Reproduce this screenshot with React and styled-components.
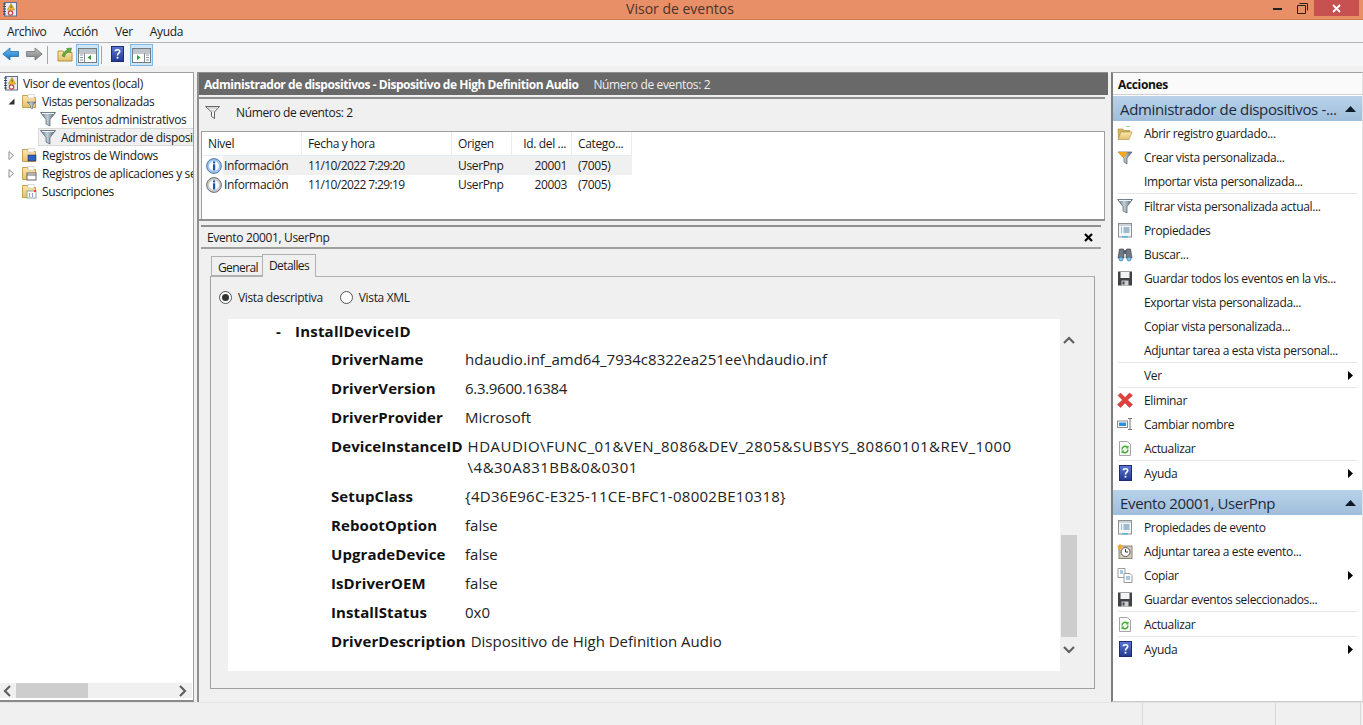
import React from 'react'
import styled, { createGlobalStyle } from 'styled-components'

const Global = createGlobalStyle`
  html, body { margin: 0; padding: 0; background: #f0f0f0; overflow: hidden; }
  * { box-sizing: border-box; }
  body { font-family: "Open Sans", "Noto Sans", sans-serif; font-size: 12px; color: #1b1b1b; letter-spacing: -0.35px; }
`

const Window = styled.div`
  width: 1363px;
  height: 725px;
  display: flex;
  flex-direction: column;
  background: #f0f0f0;
  overflow: hidden;
`
const TitleBar = styled.div`
  height: 20px;
  flex: none;
  display: grid;
  grid-template-columns: 1fr auto 1fr;
  background: #e98f67;
  border-bottom: 1px solid #c67a58;
`
const TitleIcon = styled.div`
  padding: 1px 0 0 2px;
`
const TitleText = styled.div`
  font-size: 14px;
  line-height: 18px;
  color: #4a3328;
  letter-spacing: 0;
  padding-right: 3px;
`
const WindowButtons = styled.div`
  display: flex;
  justify-content: flex-end;
  padding-right: 4px;
`
const WinBtn = styled.div`
  width: ${p => p.$w}px;
  height: 16px;
  display: flex;
  align-items: center;
  justify-content: center;
  background: ${p => p.$close ? '#c75050' : 'transparent'};
`
const MenuBar = styled.div`
  height: 23px;
  flex: none;
  display: flex;
  align-items: center;
  background: #f5f6f7;
  border-bottom: 1px solid #b4b4b4;
  padding-left: 7px;
  gap: 17px;
`
const ToolBar = styled.div`
  height: 23px;
  flex: none;
  display: flex;
  align-items: flex-start;
  background: #f5f6f7;
  padding: 1px 0 0 2px;
`
const ToolSlot = styled.span`
  display: block;
  margin: 2px 0 0 ${p => p.$ml || 0}px;
`
const ToolSep = styled.div`
  width: 1px;
  height: 18px;
  margin: 2px 0 0 ${p => p.$ml}px;
  background: #a6a6a6;
`
const ToolToggle = styled.div`
  width: 23px;
  height: 22px;
  margin-left: ${p => p.$ml}px;
  display: flex;
  align-items: center;
  justify-content: center;
  background: #cde6f7;
  border: 1px solid #7cb8e8;
`
const Main = styled.div`
  flex: 1;
  display: flex;
  padding-top: 6px;
  min-height: 0;
`
const LeftPane = styled.div`
  width: 194px;
  flex: none;
  height: 630px;
  display: flex;
  flex-direction: column;
  background: #fff;
  border: 1px solid #a0a0a0;
  border-left: 0;
  border-bottom: 2px solid #8a8a8a;
`
const Tree = styled.div`
  flex: 1;
  padding-top: 1px;
  overflow: hidden;
`
const TreeRow = styled.div`
  height: 18px;
  display: flex;
  align-items: center;
  white-space: nowrap;
  overflow: hidden;
  padding-left: ${p => p.$indent}px;
  margin-left: ${p => p.$sel ? 38 : 0}px;
  ${p => p.$sel && `
    padding-left: 1px;
    background: #f0f0f0;
    border: 1px solid #d9d9d9;
    border-right: 0;
  `}
`
const Expander = styled.span`
  width: 13px;
  flex: none;
  display: flex;
  align-items: center;
  justify-content: flex-start;
`
const TreeIcon = styled.span`
  width: 16px;
  height: 16px;
  flex: none;
  margin-right: ${p => p.$gap || 5}px;
`
const HScroll = styled.div`
  height: 15px;
  flex: none;
  display: flex;
  align-items: center;
  background: #f0f0f0;
  padding: 0 5px 0 3px;
  margin-right: 1px;
  margin-bottom: 2px;
`
const HThumb = styled.div`
  width: 72px;
  height: 15px;
  background: #cdcdcd;
  margin: 0 auto 0 4px;
`
const Mid = styled.div`
  width: 911px;
  flex: none;
  margin: 0 3px;
  height: 630px;
  display: flex;
  flex-direction: column;
  border-left: 2px solid #8f8f8f;
`
const MidHeader = styled.div`
  height: 23px;
  flex: none;
  display: flex;
  align-items: center;
  gap: 15px;
  background: #696969;
  color: #fff;
  padding-left: 5px;
  border-top: 1px solid #8f8f8f;
  font-weight: 700;
  letter-spacing: -0.45px;
  span + span { font-weight: 400; color: #eee; letter-spacing: -0.35px; }
`
const ListPanel = styled.div`
  height: 124px;
  flex: none;
  margin: 2px 3px 0 0;
  display: flex;
  flex-direction: column;
  padding: 0 0 0 2px;
  border-top: 2px solid #8f8f8f;
  border-bottom: 2px solid #8f8f8f;
`
const FilterBar = styled.div`
  height: 33px;
  flex: none;
  display: flex;
  align-items: flex-start;
  gap: 15px;
  padding: 5px 0 0 4px;
  border-bottom: 1px solid #a0a0a0;
`
const Table = styled.div`
  flex: 1;
  background: #fff;
  border-left: 1px solid #a0a0a0;
  border-right: 1px solid #a0a0a0;
`
const TableRow = styled.div`
  display: grid;
  grid-template-columns: 100px 150px 60px 60px 60px;
  width: 430px;
  height: ${p => p.$head ? 24 : 19}px;
  align-items: center;
  ${p => p.$head && 'border-bottom: 1px solid #e5eef6;'}
`
const Cell = styled.div`
  padding-left: 6px;
  white-space: nowrap;
  overflow: hidden;
  height: 100%;
  display: flex;
  align-items: center;
  background: ${p => p.$sel ? '#f0f0f0' : 'transparent'};
  justify-content: ${p => p.$right ? 'flex-end' : 'flex-start'};
  ${p => p.$right && 'padding-right: 5px;'}
  ${p => p.$head && 'border-right: 1px solid #e5eef6;'}
  ${p => p.$tight && 'letter-spacing: -0.6px;'}
`
const LevelCell = styled.div`
  height: 100%;
  display: flex;
  align-items: center;
  padding-left: 4px;
  gap: 1px;
`
const LevelText = styled.span`
  flex: 1;
  height: 100%;
  display: flex;
  align-items: center;
  background: ${p => p.$sel ? '#f0f0f0' : 'transparent'};
  padding-left: 1px;
`
const DetailBar = styled.div`
  height: 24px;
  flex: none;
  display: flex;
  align-items: center;
  justify-content: space-between;
  margin: 4px 7px 0 2px;
  padding: 0 8px 0 6px;
  border-top: 2px solid #8f8f8f;
  border-bottom: 2px solid #a0a0a0;
`
const Tabs = styled.div`
  display: flex;
  align-items: flex-end;
  height: 27px;
  flex: none;
  padding-left: 12px;
`
const Tab = styled.div`
  height: ${p => p.$active ? 23 : 20}px;
  padding: ${p => p.$active ? '0 6px' : '0 4px 0 6px'};
  display: flex;
  align-items: center;
  letter-spacing: -0.6px;
  background: #f0f0f0;
  border: 1px solid #b0b0b0;
  border-bottom: ${p => p.$active ? '0' : '1px solid #b0b0b0'};
  ${p => !p.$active && 'border-right: 0; padding-top: 2px;'}
  ${p => p.$active && 'position: relative; top: 1px; padding-bottom: 1px;'}
`
const TabPanel = styled.div`
  margin-left: 11px;
  width: 885px;
  height: 413px;
  flex: none;
  border: 1px solid #a0a0a0;
  border-top: 1px solid #b0b0b0;
  padding: 10px 0 0 8px;
`
const Radios = styled.div`
  display: flex;
  align-items: center;
  height: 20px;
  gap: 17px;
`
const RadioLabel = styled.label`
  display: flex;
  align-items: center;
  gap: 6px;
`
const RadioDot = styled.span`
  width: 13px;
  height: 13px;
  border-radius: 50%;
  border: 1px solid #555;
  background: #fff;
  display: flex;
  align-items: center;
  justify-content: center;
  &::after {
    content: '';
    width: 7px;
    height: 7px;
    border-radius: 50%;
    background: ${p => p.$on ? '#333' : 'transparent'};
  }
`
const DetailArea = styled.div`
  display: flex;
  margin: 12px 0 0 9px;
  height: 352px;
`
const WhiteBox = styled.div`
  width: 832px;
  flex: none;
  background: #fff;
  overflow: hidden;
  font-size: 15px;
  letter-spacing: 0;
  color: #222;
`
const Heading = styled.div`
  height: 26px;
  line-height: 24px;
  display: flex;
  font-weight: 700;
  color: #111;
  padding-left: 48px;
  gap: 14px;
  letter-spacing: 0.2px;
`
const DataRow = styled.div`
  display: flex;
  padding: 4px 0 4px 103px;
  line-height: 21px;
  white-space: nowrap;
`
const DataLabel = styled.span`
  min-width: 129px;
  font-weight: 700;
  color: #111;
  margin-right: 5px;
  letter-spacing: 0.1px;
`
const DataValue = styled.span`
  letter-spacing: ${p => p.$spacing || 0}px;
`
const VScroll = styled.div`
  width: 16px;
  margin-left: 1px;
  flex: none;
  display: flex;
  flex-direction: column;
  align-items: stretch;
  padding-top: 17px;
`
const VThumb = styled.div`
  height: 102px;
  margin: 187px 0 8px;
  background: #cdcdcd;
`
const ArrowWrap = styled.div`
  height: 12px;
  display: flex;
  justify-content: center;
`
const Right = styled.div`
  width: 252px;
  flex: none;
  height: 630px;
  background: #fff;
  border-left: 2px solid #7d7d7d;
  border-top: 1px solid #a0a0a0;
  border-bottom: 1px solid #c8c8c8;
  border-right: 1px solid #e0e0e0;
  display: flex;
  flex-direction: column;
`
const ActionsTitle = styled.div`
  height: 22px;
  flex: none;
  display: flex;
  align-items: center;
  padding: 2px 0 0 5px;
  font-weight: 700;
  color: #111;
  border-bottom: 1px solid #d0d0d0;
  margin-bottom: 1px;
  background: #fafafa;
`
const SectionHead = styled.div`
  height: ${p => p.$h}px;
  flex: none;
  display: flex;
  align-items: center;
  justify-content: space-between;
  padding: 0 6px 0 7px;
  font-size: 15px;
  letter-spacing: -0.35px;
  color: #1b2a3a;
  background: linear-gradient(#b9d2e9, #9fbedb);
  white-space: nowrap;
  margin-top: ${p => p.$mt || 0}px;
`
const ActionRow = styled.div`
  height: 24px;
  flex: none;
  display: flex;
  align-items: center;
  padding: 0 8px 0 4px;
  white-space: nowrap;
`
const ActionIcon = styled.span`
  width: 16px;
  height: 16px;
  flex: none;
  margin-right: 11px;
`
const ActionText = styled.span`
  flex: 1;
`
const ActionSep = styled.div`
  height: 1px;
  flex: none;
  background: #e6e6e6;
  margin: 0 5px 0 5px;
`
const StatusBar = styled.div`
  height: 23px;
  flex: none;
  display: flex;
  justify-content: flex-end;
  background: #f0f0f0;
  border-top: 1px solid #e3e3e3;
`
const StatusCell = styled.div`
  width: ${p => p.$w}px;
  border-left: 1px solid #d8d8d8;
`

const Svg = ({ children, w = 16, h = 16 }) => (
  <svg width={w} height={h} viewBox={`0 0 ${w} ${h}`} style={{ display: 'block' }}>{children}</svg>
)

const Defs = () => (
  <svg width="0" height="0" style={{ position: 'absolute' }}>
    <defs>
      <linearGradient id="fun" x1="0" x2="1" y1="0" y2="0">
        <stop offset="0" stopColor="#5f7484" /><stop offset=".45" stopColor="#c3ced6" /><stop offset="1" stopColor="#4d6172" />
      </linearGradient>
      <linearGradient id="fold" x1="0" x2="0" y1="0" y2="1">
        <stop offset="0" stopColor="#fbe9ae" /><stop offset="1" stopColor="#e4c06e" />
      </linearGradient>
      <linearGradient id="arrowB" x1="0" x2="0" y1="0" y2="1">
        <stop offset="0" stopColor="#6bc0f2" /><stop offset="1" stopColor="#1a72c4" />
      </linearGradient>
      <linearGradient id="arrowG" x1="0" x2="0" y1="0" y2="1">
        <stop offset="0" stopColor="#c4c4c4" /><stop offset="1" stopColor="#7a7a7a" />
      </linearGradient>
      <linearGradient id="help" x1="0" x2="0" y1="0" y2="1">
        <stop offset="0" stopColor="#5a78d6" /><stop offset="1" stopColor="#23378f" />
      </linearGradient>
    </defs>
  </svg>
)

const LogIcon = () => (
  <Svg>
    <rect x="2.500" y="1.500" width="12" height="13.500" fill="#e8ecf3" stroke="#5f6f8b" />
    <path d="M1 3h3M1 5.500h3M1 8h3M1 10.500h3M1 13h3" stroke="#39465c" strokeWidth="1.200" />
    <path d="M9 2.500l3.600 6.500H5.400z" fill="#f5c52d" stroke="#a97e10" strokeWidth=".6" />
    <rect x="8.600" y="4.600" width=".9" height="2.600" fill="#5c3f00" />
    <circle cx="8.500" cy="12" r="2.200" fill="#fff" stroke="#cc3b3b" strokeWidth="1.200" />
  </Svg>
)
const FunnelIcon = () => (
  <Svg>
    <path d="M.5 1.500h15l-5.500 7v6.500l-4-2v-4.500z" fill="url(#fun)" stroke="#4f5e6b" strokeWidth=".7" />
    <path d="M2 2.500h12" stroke="#f0f3f5" />
  </Svg>
)
const GoldFunnel = () => (
  <Svg>
    <path d="M1 3h14l-5 6v6l-3-2V9z" fill="url(#fun)" stroke="#56636e" strokeWidth=".7" />
    <path d="M1 3h9l-2 5H5z" fill="#f3a81c" />
  </Svg>
)
const HollowFunnel = () => (
  <Svg>
    <path d="M.5 2.500h14l-5 5.500v6.500l-3-2V8z" fill="#f6f6f6" stroke="#555" strokeWidth=".9" />
    <path d="M3 4h9M5.500 7h4" stroke="#aaa" strokeWidth=".8" />
  </Svg>
)
const Folder = ({ children }) => (
  <Svg>
    <path d="M1.500 4.500V2.500h5l1 2h7v10h-13z" fill="url(#fold)" stroke="#c69f4c" />
    <rect x="7" y="1.500" width="6" height="3.500" fill="#fff" stroke="#bbb" strokeWidth=".5" />
    {children}
  </Svg>
)
const FolderOpen = () => (
  <Svg>
    <path d="M1 4h5l1 1.500h6V7H4L1.500 14z" fill="#d9b65f" stroke="#a98a3c" strokeWidth=".6" />
    <path d="M4 7h11l-3 7.500H1z" fill="url(#fold)" stroke="#b08f3f" strokeWidth=".6" />
    <path d="M9 1.500h4" stroke="#8fd48f" />
  </Svg>
)
const FolderUp = () => (
  <Svg>
    <path d="M1 5h5l1 1.500h8V15H1z" fill="url(#fold)" stroke="#b8923c" />
    <path d="M5 10C6 6 9 4.500 10.500 4L9.500 2.500 14.500 2l-1 4.500-1.200-1.200C10 6.500 8 8.500 7.500 11z" fill="#62ae3a" stroke="#3e7f20" strokeWidth=".5" />
  </Svg>
)
const PaneIcon = ({ flip }) => (
  <Svg w={19} h={16}>
    <rect x=".5" y="1.500" width="18" height="14" fill="#fff" stroke="#7a7a7a" />
    <rect x="1" y="2" width="17" height="3" fill="#b9c4cf" />
    <path d={flip ? 'M12.500 6v9M1 6h17' : 'M6.500 6v9M1 6h17'} stroke="#8a8a8a" />
    {flip
      ? <><path d="M5 8v5l3.500-2.500z" fill="#2f9a33" /><path d="M14 8h3M14 10.500h3M14 13h3" stroke="#7f9cb5" /></>
      : <><path d="M13 8v5l-3.500-2.500z" fill="#2f9a33" /><path d="M2 8h3M2 10.500h3M2 13h3" stroke="#7f9cb5" /></>}
  </Svg>
)
const ArrowIcon = ({ dir, grey }) => (
  <Svg w={18} h={16}>
    <path
      transform={dir === 'right' ? 'translate(18 0) scale(-1 1)' : undefined}
      d="M.8 8L8 2v3.500h8.500v5H8V14z"
      fill={`url(#${grey ? 'arrowG' : 'arrowB'})`}
      stroke={grey ? '#666' : '#17619f'}
      strokeWidth=".7"
    />
  </Svg>
)
const HelpIcon = () => (
  <Svg>
    <rect x="2.500" y=".5" width="12" height="15" fill="url(#help)" stroke="#1d2b73" />
    <path d="M6.300 5.200C6.300 3.300 10.700 3 10.700 5.400 10.700 7.200 8.500 7.200 8.500 9.500" fill="none" stroke="#fff" strokeWidth="1.600" />
    <rect x="7.600" y="10.800" width="1.800" height="1.800" fill="#fff" />
  </Svg>
)
const InfoIcon = ({ blue }) => (
  <Svg>
    <circle cx="8" cy="8" r="7.400" fill={blue ? '#9fc2ea' : '#c9c9c9'} stroke={blue ? '#4f79ab' : '#707070'} />
    <circle cx="8" cy="8" r="5" fill="#fafcff" />
    <rect x="7" y="3.400" width="2.200" height="2" fill="#1f56a8" />
    <rect x="7" y="6.300" width="2.200" height="6.200" fill="#1f56a8" />
  </Svg>
)
const PropsIcon = () => (
  <Svg>
    <rect x="1.500" y="1.500" width="13" height="13.500" fill="#f3f5f7" stroke="#8e8e8e" />
    <rect x="2" y="2" width="12" height="2" fill="#ccd3da" />
    <path d="M4 6h1M4 8h1M4 10h1M6.500 6h6M6.500 8h6M6.500 10h6" stroke="#4b7fa8" />
    <rect x="5" y="14" width="6" height="1.500" fill="#4db6e8" />
  </Svg>
)
const Binoculars = () => (
  <Svg>
    <path d="M1 12l1.500-9h4L7 12zM9 12l.5-9h4L15 12z" fill="#6f7a85" stroke="#333" strokeWidth=".6" />
    <rect x="6.500" y="4" width="3" height="4" fill="#55606a" />
    <circle cx="4" cy="13" r="2" fill="#7cc4f0" stroke="#2a6ea0" strokeWidth=".6" />
    <circle cx="12" cy="13" r="2" fill="#7cc4f0" stroke="#2a6ea0" strokeWidth=".6" />
  </Svg>
)
const Floppy = () => (
  <Svg>
    <path d="M1 1.500h14v14H1z" fill="#3f4347" />
    <rect x="3.500" y="2" width="9" height="6" fill="#f4f4f4" />
    <rect x="4.500" y="10.500" width="7" height="5" fill="#cfcfcf" />
    <rect x="5.500" y="11.500" width="2" height="3" fill="#44484c" />
  </Svg>
)
const RedX = () => (
  <Svg>
    <path d="M1 3.500L3.500 1 8 5.500 12.500 1 15.500 3.500 10.500 8l5 4.500-3 3L8 11l-4.500 4.500-3-3L5.500 8z" fill="#e0403c" stroke="#b3302c" strokeWidth=".5" />
  </Svg>
)
const RenameIcon = () => (
  <Svg>
    <rect x=".5" y="5" width="10" height="6.500" fill="#fff" stroke="#8b8b8b" />
    <rect x="2" y="6.500" width="7" height="3.500" fill="#2d8ee0" />
    <path d="M11 2.500h4M13 2.500v11M11 13.500h4" stroke="#777" fill="none" />
  </Svg>
)
const RefreshIcon = () => (
  <Svg>
    <path d="M2.500 1.500h8l3 3v11h-11z" fill="#fbfbfb" stroke="#a5a5a5" />
    <path d="M5 9.500a3.200 3.200 0 0 1 5.500-2.200M11 9.500a3.200 3.200 0 0 1-5.500 2.200" fill="none" stroke="#3fae2d" strokeWidth="1.500" />
    <path d="M11.500 5.500v3h-3zM4.500 13.500v-3h3z" fill="#3fae2d" />
  </Svg>
)
const ClockTask = () => (
  <Svg>
    <rect x="2" y="3" width="13" height="12.500" fill="#d4cdbd" stroke="#8d8676" />
    <circle cx="8.500" cy="9" r="4.500" fill="#fff" stroke="#555" />
    <path d="M8.500 6v3h2.500" fill="none" stroke="#333" />
    <path d="M3 .5l1 2 2 .5-1.500 1.500L5 7 3 5.500 1 7l.5-2.500L0 3l2-.5z" fill="#f5a623" />
  </Svg>
)
const CopyIcon = () => (
  <Svg>
    <path d="M1 1.500h7v9H1z" fill="#fff" stroke="#9a9a9a" />
    <path d="M3 4h3M3 6h3" stroke="#4b8fc4" />
    <path d="M7 6.500h6l2 2v7H7z" fill="#fff" stroke="#9a9a9a" />
    <path d="M9 10h4M9 12h4" stroke="#4b8fc4" />
  </Svg>
)
const Tri = ({ dir }) => (
  <svg width="7" height="9" viewBox="0 0 7 9" style={{ display: 'block' }}>
    {dir === 'right' && <path d="M1 0l5 4.500-5 4.500z" fill="#000" />}
    {dir === 'open' && <path d="M6.500 1.500v6h-6z" fill="#333" />}
    {dir === 'closed' && <path d="M1 .5l4.500 4-4.500 4z" fill="#fff" stroke="#8e8e8e" />}
  </svg>
)
const UpTri = () => (
  <svg width="11" height="6" viewBox="0 0 11 6"><path d="M0 6L5.500 0 11 6z" fill="#0d1a28" /></svg>
)
const Chevron = ({ dir }) => {
  const d = {
    up: 'M1 7L6 2l5 5',
    down: 'M1 2l5 5 5-5',
    left: 'M7 1L2 6l5 5',
    right: 'M2 1l5 5-5 5',
  }[dir]
  const horizontal = dir === 'left' || dir === 'right'
  return (
    <svg width={horizontal ? 9 : 12} height={horizontal ? 12 : 9} viewBox={horizontal ? '0 0 9 12' : '0 0 12 9'} style={{ display: 'block' }}>
      <path d={d} fill="none" stroke="#606060" strokeWidth="2.200" />
    </svg>
  )
}

const treeRows = [
  { indent: 3, text: 'Visor de eventos (local)', icon: <LogIcon />, gap: 4 },
  { indent: 8, exp: 'open', text: 'Vistas personalizadas', icon: <Folder><path d="M6 9h9l-3.500 3.500V16L9.500 15v-2.500z" fill="url(#fun)" stroke="#5f6e7b" strokeWidth=".5" /></Folder> },
  { indent: 40, text: 'Eventos administrativos', icon: <FunnelIcon /> },
  { indent: 40, sel: true, text: 'Administrador de dispositivos', icon: <FunnelIcon /> },
  { indent: 8, exp: 'closed', text: 'Registros de Windows', icon: <Folder><rect x="7" y="8" width="8" height="6" fill="#2c62c8" stroke="#223" strokeWidth=".5" /></Folder> },
  { indent: 8, exp: 'closed', text: 'Registros de aplicaciones y servicios', icon: <Folder><rect x="6" y="8" width="9" height="7" fill="#fff" stroke="#666" /><path d="M6 10h9" stroke="#666" /></Folder> },
  { indent: 21, text: 'Suscripciones', icon: <Folder><rect x="6" y="8" width="9" height="7" fill="#fff" stroke="#8aa" /><path d="M8 11h1M11 11h1M8 13h1M11 13h1" stroke="#33a" /><path d="M13 7h2v2h-2z" fill="#e44" /></Folder> },
]

const events = [
  { date: '11/10/2022 7:29:20', id: '20001', sel: true },
  { date: '11/10/2022 7:29:19', id: '20003' },
]

const dataRows = [
  ['DriverName', 'hdaudio.inf_amd64_7934c8322ea251ee\\hdaudio.inf'],
  ['DriverVersion', '6.3.9600.16384', -0.3],
  ['DriverProvider', 'Microsoft'],
  ['DeviceInstanceID', <>HDAUDIO\FUNC_01&amp;VEN_8086&amp;DEV_2805&amp;SUBSYS_80860101&amp;REV_1000<br />\4&amp;30A831BB&amp;0&amp;0301</>, 0.48],
  ['SetupClass', '{4D36E96C-E325-11CE-BFC1-08002BE10318}', 0.28],
  ['RebootOption', 'false'],
  ['UpgradeDevice', 'false'],
  ['IsDriverOEM', 'false'],
  ['InstallStatus', '0x0'],
  ['DriverDescription', 'Dispositivo de High Definition Audio'],
]

const firstActions = [
  [<FolderOpen />, 'Abrir registro guardado...'],
  [<GoldFunnel />, 'Crear vista personalizada...'],
  [null, 'Importar vista personalizada...'],
  'sep',
  [<FunnelIcon />, 'Filtrar vista personalizada actual...'],
  [<PropsIcon />, 'Propiedades'],
  [<Binoculars />, 'Buscar...'],
  [<Floppy />, 'Guardar todos los eventos en la vis...'],
  [null, 'Exportar vista personalizada...'],
  [null, 'Copiar vista personalizada...'],
  [null, 'Adjuntar tarea a esta vista personal...'],
  'sep',
  [null, 'Ver', true],
  'sep',
  [<RedX />, 'Eliminar'],
  [<RenameIcon />, 'Cambiar nombre'],
  [<RefreshIcon />, 'Actualizar'],
  'sep',
  [<HelpIcon />, 'Ayuda', true],
]

const secondActions = [
  [<PropsIcon />, 'Propiedades de evento'],
  [<ClockTask />, 'Adjuntar tarea a este evento...'],
  [<CopyIcon />, 'Copiar', true],
  [<Floppy />, 'Guardar eventos seleccionados...'],
  'sep',
  [<RefreshIcon />, 'Actualizar'],
  'sep',
  [<HelpIcon />, 'Ayuda', true],
]

const ActionList = ({ items }) => items.map((item, i) => {
  if (item === 'sep') return <ActionSep key={i} />
  const [icon, text, more] = item
  return (
    <ActionRow key={i}>
      <ActionIcon>{icon}</ActionIcon>
      <ActionText>{text}</ActionText>
      {more && <Tri dir="right" />}
    </ActionRow>
  )
})

const App = () => {
  return (
    <Window>
      <Global />
      <Defs />
      <TitleBar>
        <TitleIcon><LogIcon /></TitleIcon>
        <TitleText>Visor de eventos</TitleText>
        <WindowButtons>
          <WinBtn $w={26}>
            <svg width="9" height="3"><rect width="9" height="2" y="1" fill="#222" /></svg>
          </WinBtn>
          <WinBtn $w={24}>
            <svg width="11" height="11" viewBox="0 0 11 11"><path d="M2.500.5h8v7M.5 2.500h8v8h-8z" fill="none" stroke="#222" /></svg>
          </WinBtn>
          <WinBtn $w={45} $close>
            <svg width="9" height="9" viewBox="0 0 9 9"><path d="M1 1l7 7M8 1L1 8" stroke="#fff" strokeWidth="1.800" /></svg>
          </WinBtn>
        </WindowButtons>
      </TitleBar>
      <MenuBar>
        <span>Archivo</span>
        <span>Acción</span>
        <span>Ver</span>
        <span>Ayuda</span>
      </MenuBar>
      <ToolBar>
        <ToolSlot><ArrowIcon dir="left" /></ToolSlot>
        <ToolSlot $ml={5}><ArrowIcon dir="right" grey /></ToolSlot>
        <ToolSep $ml={4} />
        <ToolSlot $ml={9}><FolderUp /></ToolSlot>
        <ToolToggle $ml={3}><PaneIcon /></ToolToggle>
        <ToolSep $ml={2} />
        <ToolSlot $ml={7}><HelpIcon /></ToolSlot>
        <ToolToggle $ml={5}><PaneIcon flip /></ToolToggle>
      </ToolBar>
      <Main>
        <LeftPane>
          <Tree>
            {treeRows.map((r) => (
              <TreeRow key={r.text} $indent={r.indent} $sel={r.sel}>
                {r.exp && <Expander><Tri dir={r.exp} /></Expander>}
                <TreeIcon $gap={r.gap}>{r.icon}</TreeIcon>
                {r.text}
              </TreeRow>
            ))}
          </Tree>
          <HScroll>
            <Chevron dir="left" />
            <HThumb />
            <Chevron dir="right" />
          </HScroll>
        </LeftPane>
        <Mid>
          <MidHeader>
            <span>Administrador de dispositivos - Dispositivo de High Definition Audio</span>
            <span>Número de eventos: 2</span>
          </MidHeader>
          <ListPanel>
            <FilterBar>
              <HollowFunnel />
              <span>Número de eventos: 2</span>
            </FilterBar>
            <Table>
              <TableRow $head>
                <Cell $head>Nivel</Cell>
                <Cell $head>Fecha y hora</Cell>
                <Cell $head>Origen</Cell>
                <Cell $head $right>Id. del ...</Cell>
                <Cell $head>Catego...</Cell>
              </TableRow>
              {events.map((e) => (
                <TableRow key={e.id}>
                  <LevelCell>
                    <InfoIcon blue={e.sel} />
                    <LevelText $sel={e.sel}>Información</LevelText>
                  </LevelCell>
                  <Cell $sel={e.sel} $tight>{e.date}</Cell>
                  <Cell $sel={e.sel}>UserPnp</Cell>
                  <Cell $sel={e.sel} $right>{e.id}</Cell>
                  <Cell $sel={e.sel}>(7005)</Cell>
                </TableRow>
              ))}
            </Table>
          </ListPanel>
          <DetailBar>
            <span>Evento 20001, UserPnp</span>
            <svg width="9" height="9" viewBox="0 0 9 9"><path d="M1 1l7 7M8 1L1 8" stroke="#000" strokeWidth="2.200" /></svg>
          </DetailBar>
          <Tabs>
            <Tab>General</Tab>
            <Tab $active>Detalles</Tab>
          </Tabs>
          <TabPanel>
            <Radios>
              <RadioLabel><RadioDot $on />Vista descriptiva</RadioLabel>
              <RadioLabel><RadioDot />Vista XML</RadioLabel>
            </Radios>
            <DetailArea>
              <WhiteBox>
                <Heading><span>-</span><span>InstallDeviceID</span></Heading>
                {dataRows.map(([label, value, spacing]) => (
                  <DataRow key={label}>
                    <DataLabel>{label}</DataLabel>
                    <DataValue $spacing={spacing}>{value}</DataValue>
                  </DataRow>
                ))}
              </WhiteBox>
              <VScroll>
                <ArrowWrap><Chevron dir="up" /></ArrowWrap>
                <VThumb />
                <ArrowWrap><Chevron dir="down" /></ArrowWrap>
              </VScroll>
            </DetailArea>
          </TabPanel>
        </Mid>
        <Right>
          <ActionsTitle>Acciones</ActionsTitle>
          <SectionHead $h={25}>
            <span>Administrador de dispositivos -...</span>
            <UpTri />
          </SectionHead>
          <ActionList items={firstActions} />
          <SectionHead $h={25} $mt={5}>
            <span>Evento 20001, UserPnp</span>
            <UpTri />
          </SectionHead>
          <ActionList items={secondActions} />
        </Right>
      </Main>
      <StatusBar>
        <StatusCell $w={133} />
        <StatusCell $w={85} />
        <StatusCell $w={3} />
      </StatusBar>
    </Window>
  )
}

export default App
